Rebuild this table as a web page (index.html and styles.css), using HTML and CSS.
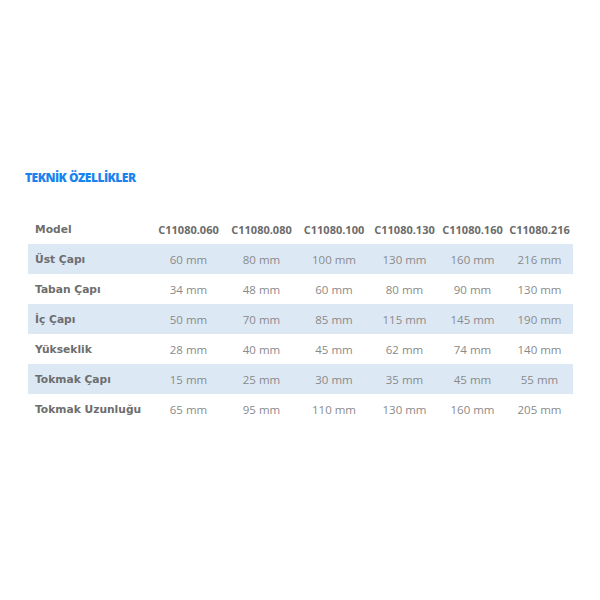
FILE: index.html
```html
<!DOCTYPE html>
<html lang="tr">
<head>
<meta charset="utf-8">
<title>Teknik Özellikler</title>
<link rel="stylesheet" href="styles.css">
</head>
<body>
<section class="specs">
  <h2 class="specs-title">TEKNİK ÖZELLİKLER</h2>
  <table class="spec-table">
    <thead>
      <tr>
        <th class="label">Model</th>
        <th>C11080.060</th>
        <th>C11080.080</th>
        <th>C11080.100</th>
        <th>C11080.130</th>
        <th>C11080.160</th>
        <th>C11080.216</th>
      </tr>
    </thead>
    <tbody>
      <tr class="band">
        <td class="label">Üst Çapı</td>
        <td>60 mm</td><td>80 mm</td><td>100 mm</td><td>130 mm</td><td>160 mm</td><td>216 mm</td>
      </tr>
      <tr>
        <td class="label">Taban Çapı</td>
        <td>34 mm</td><td>48 mm</td><td>60 mm</td><td>80 mm</td><td>90 mm</td><td>130 mm</td>
      </tr>
      <tr class="band">
        <td class="label">İç Çapı</td>
        <td>50 mm</td><td>70 mm</td><td>85 mm</td><td>115 mm</td><td>145 mm</td><td>190 mm</td>
      </tr>
      <tr>
        <td class="label">Yükseklik</td>
        <td>28 mm</td><td>40 mm</td><td>45 mm</td><td>62 mm</td><td>74 mm</td><td>140 mm</td>
      </tr>
      <tr class="band">
        <td class="label">Tokmak Çapı</td>
        <td>15 mm</td><td>25 mm</td><td>30 mm</td><td>35 mm</td><td>45 mm</td><td>55 mm</td>
      </tr>
      <tr>
        <td class="label">Tokmak Uzunluğu</td>
        <td>65 mm</td><td>95 mm</td><td>110 mm</td><td>130 mm</td><td>160 mm</td><td>205 mm</td>
      </tr>
    </tbody>
  </table>
</section>
</body>
</html>
```

FILE: styles.css
```css
html, body {
  margin: 0;
  padding: 0;
  background: #ffffff;
}

.specs {
  padding: 170px 0 0 25px;
}

.specs-title {
  margin: 0 0 28px 0;
  font-family: "Open Sans", "DejaVu Sans", sans-serif;
  font-weight: 800;
  font-size: 12px;
  line-height: 16px;
  color: #1a84ee;
  letter-spacing: -0.5px;
}

.spec-table {
  margin-left: 3px;
  width: 544px;
  border-collapse: collapse;
  table-layout: fixed;
}

.spec-table th,
.spec-table td {
  height: 30px;
  padding: 0;
  text-align: center;
  vertical-align: middle;
  white-space: nowrap;
}

.spec-table th {
  font-family: "Open Sans", sans-serif;
  font-weight: 700;
  font-size: 11px;
  color: #6b6b6b;
}

.spec-table td {
  font-family: "Open Sans", sans-serif;
  font-weight: 400;
  font-size: 11.5px;
  color: #8a8a8a;
}

.spec-table .label {
  text-align: left;
  padding-left: 7px;
  font-family: "DejaVu Sans", Verdana, sans-serif;
  font-weight: 700;
  font-size: 10.7px;
  color: #6e6e6e;
  width: 117px;
}

.spec-table th:nth-child(2),
.spec-table th:nth-child(3) { width: 73px; }
.spec-table th:nth-child(4) { width: 72px; }
.spec-table th:nth-child(5) { width: 69px; }
.spec-table th:nth-child(6),
.spec-table th:nth-child(7) { width: 67px; }

.spec-table .band {
  background: #dde8f5;
}
```
